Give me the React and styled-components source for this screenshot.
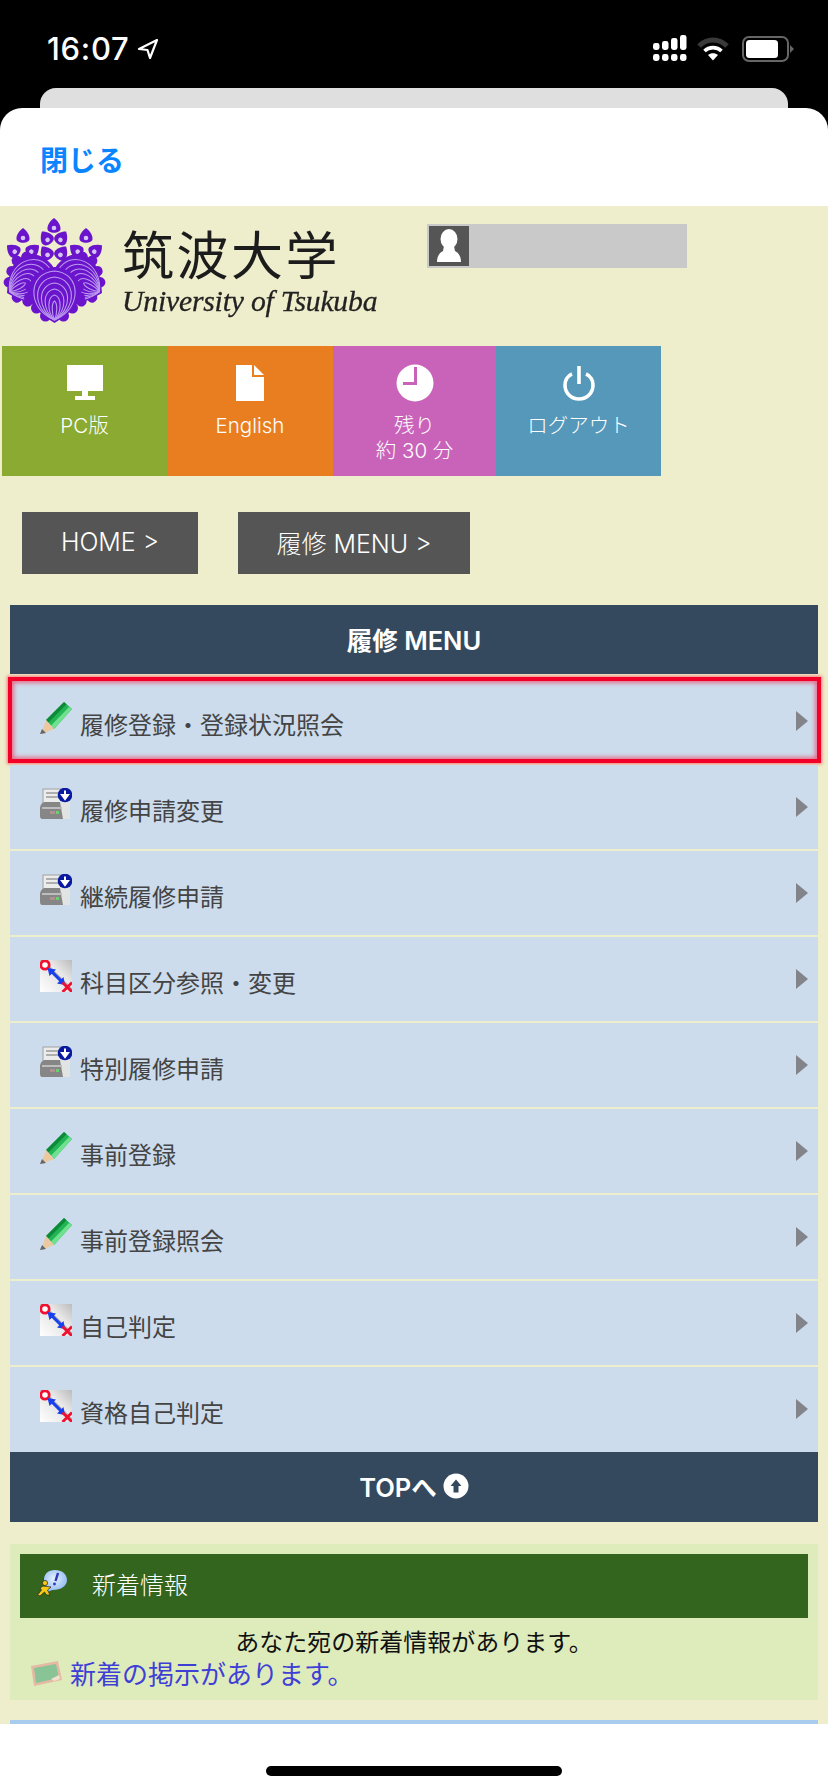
import React from 'react';
import styled, { createGlobalStyle } from 'styled-components';

const JP = `"Noto Sans CJK JP", "Noto Sans", sans-serif`;
const LATIN_JP = `"Inter", "Noto Sans CJK JP", sans-serif`;

const GlobalStyle = createGlobalStyle`
  html, body { margin: 0; padding: 0; background: #000; }
  * { box-sizing: border-box; }
`;

const Screen = styled.div`
  width: 828px;
  height: 1792px;
  overflow: hidden;
  background: #000;
  font-family: ${JP};
  display: flex;
  flex-direction: column;
`;

/* ---------- status bar ---------- */
const StatusBar = styled.div`
  height: 88px;
  flex: none;
  display: flex;
  align-items: flex-start;
  justify-content: space-between;
  padding: 29px 34px 0 47px;
`;
const Clock = styled.div`
  display: flex;
  align-items: center;
  gap: 8px;
  color: #fff;
  font-family: 'Inter', 'Liberation Sans', sans-serif;
  font-size: 31px;
  font-weight: 500;
  line-height: 40px;
  letter-spacing: 0.7px;
`;
const StatusIcons = styled.div`
  display: flex;
  align-items: center;
  height: 40px;
`;
const WifiSlot = styled.div`
  display: flex;
  margin: 0 13px 0 10px;
`;
const BackCard = styled.div`
  height: 20px;
  flex: none;
  margin: 0 40px;
  background: #dfdfdf;
  border-radius: 16px 16px 0 0;
`;

/* ---------- sheet ---------- */
const Sheet = styled.div`
  flex: 1;
  display: flex;
  flex-direction: column;
  background: #fff;
  border-radius: 22px 22px 0 0;
  overflow: hidden;
`;
const NavBar = styled.div`
  height: 98px;
  flex: none;
  padding: 31px 0 0 40px;
  color: #0a84ff;
  font-size: 28px;
  font-weight: 700;
  line-height: 40px;
`;
const Page = styled.div`
  height: 1518px;
  flex: none;
  background: #eeedcc;
  overflow: hidden;
`;
const HomeArea = styled.div`
  flex: 1;
  display: flex;
  justify-content: center;
  padding-top: 42px;
  background: #fff;
`;
const HomeBar = styled.div`
  width: 296px;
  height: 10px;
  border-radius: 5px;
  background: #000;
`;

/* ---------- top of the page ---------- */
const TopRow = styled.div`
  height: 140px;
  display: flex;
  align-items: flex-start;
`;
const Logo = styled.div`
  width: 427px;
  height: 140px;
  display: flex;
  padding: 12px 0 0 2px;
  filter: blur(0.5px);
`;
const LogoWords = styled.div`
  display: flex;
  flex-direction: column;
  margin-left: 15px;
`;
const LogoKanji = styled.div`
  color: #1c1c1c;
  font-size: 52px;
  line-height: 58px;
  margin: 6px 0 0 0;
  letter-spacing: 2.5px;
  font-weight: 400;
  white-space: nowrap;
`;
const LogoLatin = styled.div`
  color: #222;
  font-family: 'Liberation Serif', serif;
  font-style: italic;
  font-size: 29.7px;
  line-height: 34px;
  letter-spacing: -0.2px;
  margin-top: 2px;
  white-space: nowrap;
  -webkit-text-stroke: 0.3px #222;
`;
const UserBox = styled.div`
  width: 260px;
  height: 44px;
  margin-top: 18px;
  padding: 2px;
  background: #c9c9c9;
`;
const UserIcon = styled.div`
  width: 40px;
  height: 40px;
  background: #555;
  display: flex;
  align-items: center;
  justify-content: center;
`;

const Tiles = styled.div`
  display: flex;
  margin-left: 2px;
  height: 130px;
`;
const Tile = styled.div`
  width: ${p => p.$w}px;
  background: ${p => p.$bg};
  color: #fff;
  display: flex;
  flex-direction: column;
  align-items: center;
  padding-top: 18px;
  font-family: ${LATIN_JP};
  font-size: 20.5px;
  font-weight: 300;
  line-height: 25px;
  text-align: center;
`;
const TileIcon = styled.div`
  height: 38px;
  margin-bottom: 11px;
  display: flex;
  align-items: center;
  justify-content: center;
`;

const Crumbs = styled.div`
  display: flex;
  gap: 40px;
  margin: 36px 0 0 22px;
`;
const Crumb = styled.div`
  width: ${p => p.$w}px;
  height: 62px;
  padding-bottom: 2px;
  background: #555;
  color: #fff;
  display: flex;
  align-items: center;
  justify-content: center;
  font-family: ${LATIN_JP};
  font-size: 25px;
  font-weight: 300;
`;

/* ---------- menu ---------- */
const Menu = styled.div`
  margin: 31px 10px 0;
`;
const MenuHead = styled.div`
  height: ${p => p.$h}px;
  padding-bottom: 3px;
  background: #34495e;
  color: #fff;
  display: flex;
  align-items: center;
  justify-content: center;
  gap: 6px;
  font-family: ${LATIN_JP};
  font-size: 25.5px;
  font-weight: 600;
`;
const HeadGap = styled.div`
  height: 5px;
`;
const Row = styled.div`
  position: relative;
  height: 86px;
  display: flex;
  align-items: flex-start;
  padding: 24px 0 0 30px;
  background: #ccdcec;
  border-bottom: 2px solid #eeedcc;
  color: #444;
  font-size: 24px;
  line-height: 36px;
  &:nth-last-child(2) { border-bottom: 0; height: 85px; }
`;
const HiRow = styled(Row)`
  &::after {
    content: '';
    position: absolute;
    left: -2px;
    right: -3px;
    top: -2px;
    bottom: 0;
    border: 4px solid #f20028;
    box-shadow: 0 0 3px 1px rgba(255, 0, 40, 0.5), inset 0 0 4px 2px rgba(255, 0, 40, 0.5);
  }
`;
const RowIcon = styled.div`
  width: 32px;
  height: 32px;
  margin: -1px 8px 0 0;
  flex: none;
  filter: blur(0.4px);
`;
const RowLabel = styled.span`
  margin-top: 3px;
`;
const Arrow = styled.div`
  position: absolute;
  right: 10px;
  top: 32px;
  width: 0;
  height: 0;
  border-left: 12px solid #83838a;
  border-top: 10.5px solid transparent;
  border-bottom: 10.5px solid transparent;
`;

/* ---------- news ---------- */
const News = styled.div`
  margin: 22px 10px 0;
  height: 156px;
  padding: 10px 10px 0;
  background: #deecbc;
`;
const NewsHead = styled.div`
  height: 64px;
  background: #34651f;
  color: #fff;
  display: flex;
  align-items: center;
  padding: 0 0 5px 17px;
  font-size: 24px;
  font-weight: 300;
  gap: 25px;
`;
const NewsText = styled.div`
  margin-top: 7px;
  color: #111;
  text-align: center;
  font-size: 24px;
  line-height: 32px;
`;
const NewsLink = styled.div`
  display: flex;
  align-items: center;
  gap: 8px;
  padding-left: 11px;
  height: 32px;
  color: #3f3fd6;
  font-size: 26px;
  line-height: 32px;
`;
const NextBlock = styled.div`
  margin: 20px 10px 0;
  height: 10px;
  background: #a8cbee;
`;

/* ---------- drawings ---------- */
const Location = () => (
  <svg width="22" height="22" viewBox="0 0 22 22">
    <path d="M20 2 L2 11 L10.5 12 L13 20 Z" fill="none" stroke="#fff" strokeWidth="2.2" strokeLinejoin="round" />
  </svg>
);
const Signal = () => (
  <svg width="34" height="28" viewBox="0 0 34 28" fill="#fff">
    {[
      [0, 8],
      [9, 6],
      [18, 3],
      [27, 0],
    ].map(([x, top]) => (
      <g key={x}>
        <rect x={x} y={19} width="6.5" height="7" rx="2.4" />
        <rect x={x} y={top} width="6.5" height={15 - top} rx="2.4" />
      </g>
    ))}
  </svg>
);
const Wifi = () => (
  <svg width="32" height="24" viewBox="0 0 32 24" fill="none">
    <path d="M2 9 C10 1 22 1 30 9" stroke="#3a3a3a" strokeWidth="5" />
    <path d="M7.5 14 C12 9.5 20 9.5 24.5 14" stroke="#fff" strokeWidth="3.6" />
    <path d="M16 23.5 L11 18 C14 15.8 18 15.8 21 18 Z" fill="#fff" />
  </svg>
);
const Battery = () => (
  <svg width="52" height="26" viewBox="0 0 52 26">
    <rect x="1" y="1" width="45" height="24" rx="6" fill="none" stroke="#666" strokeWidth="2" />
    <rect x="4" y="4" width="32" height="18" rx="3.5" fill="#fff" />
    <path d="M48 9 L52 13 L48 17 Z" fill="#666" />
  </svg>
);

const PURPLE = '#6a14cc';
const LILAC = '#bb9aee';

const Bud = ({ x, y, r = 0 }) => (
  <g transform={`translate(${x} ${y}) rotate(${r})`}>
    <path d="M0 -9 C3 -7 7 -2 6.5 2 C6 7 -6 7 -6.5 2 C-7 -2 -3 -7 0 -9 Z" fill={PURPLE} />
    <circle cy="1" r="2.3" fill="#d6c2f4" />
  </g>
);

const Lobe = ({ transform }) => (
  <g transform={transform}>
    <path d="M0 0 C-20 2 -28 16 -26 28 C-24 40 -10 50 0 56 C10 50 24 40 26 28 C28 16 20 2 0 0 Z" fill={PURPLE} />
    {[
      [24, 20],
      [25, 31],
      [18, 41],
      [9, 49],
    ].map(([x, y]) => (
      <g key={y} fill={PURPLE}>
        <circle cx={-x} cy={y} r="5.5" />
        <circle cx={x} cy={y} r="5.5" />
      </g>
    ))}
    <g fill="none" stroke={LILAC} strokeWidth="1.1">
      <path d="M0 53 C-28 42 -27 6 0 4 C27 6 28 42 0 53" />
      <path d="M0 53 C-23 42 -22 12 0 10 C22 12 23 42 0 53" />
      <path d="M0 53 C-18 42 -17 18 0 16 C17 18 18 42 0 53" />
      <path d="M0 53 C-13 42 -12 24 0 22 C12 24 13 42 0 53" />
      <path d="M0 53 C-8 44 -7 30 0 28 C7 30 8 44 0 53" />
      <path d="M0 53 C-3 46 -3 36 0 34 C3 36 3 46 0 53" />
    </g>
  </g>
);

const Kiri = () => (
  <svg width="105" height="105" viewBox="0 0 105 105">
    <Bud x={52} y={9} />
    <Bud x={45} y={21} r={-35} />
    <Bud x={59} y={21} r={35} />
    <Bud x={45} y={36} r={-35} />
    <Bud x={59} y={36} r={35} />
    <Bud x={21} y={19} />
    <Bud x={12} y={33} r={-50} />
    <Bud x={30} y={33} r={50} />
    <Bud x={84} y={19} />
    <Bud x={75} y={33} r={-50} />
    <Bud x={93} y={33} r={50} />
    <Lobe transform="translate(52 50) rotate(62) scale(0.95)" />
    <Lobe transform="translate(53 50) rotate(-62) scale(0.95)" />
    <Lobe transform="translate(52.5 49)" />
  </svg>
);

const Person = () => (
  <svg width="28" height="34" viewBox="0 0 28 34" fill="#fff">
    <ellipse cx="14" cy="10" rx="8.5" ry="10" />
    <path d="M9 17 H19 L20 22 C24 24 26 28 26 33 H2 C2 28 4 24 8 22 Z" />
  </svg>
);
const Monitor = () => (
  <svg width="36" height="36" viewBox="0 0 36 36" fill="#fff">
    <rect width="36" height="26" />
    <rect x="15" y="26" width="6" height="5" />
    <rect x="8" y="31" width="20" height="4" />
  </svg>
);
const Doc = () => (
  <svg width="28" height="36" viewBox="0 0 28 36" fill="#fff">
    <path d="M0 0 H16 V12 H28 V36 H0 Z" />
    <path d="M18 0 L28 10 H18 Z" />
  </svg>
);
const ClockIcon = () => (
  <svg width="38" height="38" viewBox="0 0 38 38">
    <circle cx="19" cy="19" r="18.5" fill="#fff" />
    <path d="M21 3 V21 H7 V18 H18 V3 Z" fill="#c963b9" />
  </svg>
);
const Power = () => (
  <svg width="32" height="36" viewBox="0 0 32 36" fill="none" stroke="#fff" strokeWidth="3.6">
    <path d="M9 9 C4 11 2 16 2 20 C2 28 8 34 16 34 C24 34 30 28 30 20 C30 16 28 11 23 9" />
    <path d="M16 1 V19" />
  </svg>
);

const Pencil = () => (
  <svg width="32" height="32" viewBox="0 0 32 32">
    <path d="M6 18 L24 0 L32 7 L14 27 Z" fill="#22b455" />
    <path d="M6 18 L24 0 L26.5 2.2 L8.5 20.5 Z" fill="#0c8a38" />
    <path d="M11 23.5 L29 5 L32 7 L14 27 Z" fill="#6fe08e" />
    <path d="M6 18 L14 27 L1 32 Z" fill="#ecc8a0" />
    <path d="M2 27 L6 31 L0 32 Z" fill="#666" />
  </svg>
);
const Printer = () => (
  <svg width="32" height="32" viewBox="0 0 32 32">
    <rect x="3" y="1" width="21" height="16" fill="#ececec" stroke="#a0a0a0" />
    <path d="M6 5 H20 M6 9 H20" stroke="#999" strokeWidth="1.5" />
    <rect x="20" y="12" width="10" height="19" fill="#e2e4e4" />
    <path d="M4 14 H20 L23 31 H3 C0 31 0 29 0 27 V20 C0 17 2 15 4 14 Z" fill="#868686" />
    <rect x="2" y="19" width="20" height="2" fill="#bdbdbd" />
    <rect x="16" y="23" width="3" height="3" fill="#6cd070" />
    <rect x="10" y="23" width="5" height="3" fill="#b09090" />
    <circle cx="25" cy="7" r="7.3" fill="#0a1aa0" />
    <path d="M25 2.5 V8 M22 7 L25 11 L28 7 Z" stroke="#fff" strokeWidth="2" fill="#fff" />
  </svg>
);
const Measure = () => (
  <svg width="32" height="32" viewBox="0 0 32 32">
    <defs>
      <linearGradient id="meas" x1="0" y1="1" x2="1" y2="0">
        <stop offset="0" stopColor="#fff" />
        <stop offset="0.47" stopColor="#e8e8e8" />
        <stop offset="0.53" stopColor="#8a8a8a" />
        <stop offset="0.57" stopColor="#ededed" />
        <stop offset="1" stopColor="#bbb" />
      </linearGradient>
    </defs>
    <rect width="32" height="32" fill="url(#meas)" />
    <circle cx="5" cy="5" r="4.2" fill="#fff" stroke="#f01030" strokeWidth="2.8" />
    <path d="M10 10 L23 23" stroke="#1840f0" strokeWidth="3" />
    <path d="M7.5 8 L16 9.5 L9.5 16 Z M25 25 L17 23.5 L23.5 17 Z" fill="#1840f0" />
    <path d="M22.5 22.5 L32 32 M32 22.5 L22.5 32" stroke="#f01030" strokeWidth="2.8" />
  </svg>
);
const UpCircle = () => (
  <svg width="26" height="26" viewBox="0 0 26 26">
    <circle cx="13" cy="13" r="12.5" fill="#fff" />
    <path d="M13 6.5 L18.5 13 H15.5 V19.5 H10.5 V13 H7.5 Z" fill="#34495e" />
  </svg>
);
const Runner = () => (
  <svg width="30" height="27" viewBox="0 0 30 27">
    <defs>
      <radialGradient id="bub" cx="0.45" cy="0.4" r="0.7">
        <stop offset="0" stopColor="#e8f2ff" />
        <stop offset="1" stopColor="#7fb0ee" />
      </radialGradient>
    </defs>
    <path d="M18 0 C25 0 30 4 30 10 C30 16 24 20 16 20 C14 20 12 22 9 22 C10 19 7 15 7 10 C7 4 11 0 18 0 Z" fill="url(#bub)" />
    <path d="M21 3 L18.5 11" stroke="#2a38b8" strokeWidth="2.4" />
    <circle cx="17.5" cy="14" r="1.4" fill="#2a38b8" />
    <circle cx="8" cy="13" r="2.6" fill="#f4c814" stroke="#222" strokeWidth="0.7" />
    <path d="M6 16 L14 17 L10.5 20 L13 25 L9.5 25 L7.5 22 L3 26 L0.5 25 L4.5 20 L3 18 Z" fill="#f4c814" stroke="#222" strokeWidth="0.7" />
  </svg>
);
const Board = () => (
  <svg width="31" height="25" viewBox="0 0 31 25">
    <path d="M0 5 L27 0 L31 19 L3 25 Z" fill="#e6b9a2" />
    <path d="M3 7 L25 3 L28 17 L5 22 Z" fill="#88c496" />
    <path d="M20 18 L28 14 L29 18 L23 20 Z" fill="#f0e0d0" />
  </svg>
);

const rowIcons = { pencil: Pencil, printer: Printer, measure: Measure };

const rows = [
  { icon: 'printer', label: '履修申請変更' },
  { icon: 'printer', label: '継続履修申請' },
  { icon: 'measure', label: '科目区分参照・変更' },
  { icon: 'printer', label: '特別履修申請' },
  { icon: 'pencil', label: '事前登録' },
  { icon: 'pencil', label: '事前登録照会' },
  { icon: 'measure', label: '自己判定' },
  { icon: 'measure', label: '資格自己判定' },
];

const tiles = [
  { w: 165, bg: '#8aaa32', icon: <Monitor />, text: ['PC版'] },
  { w: 166, bg: '#e87e20', icon: <Doc />, text: ['English'] },
  { w: 163, bg: '#c963b9', icon: <ClockIcon />, text: ['残り', '約 30 分'] },
  { w: 165, bg: '#5598ba', icon: <Power />, text: ['ログアウト'] },
];

const App = () => (
  <Screen>
    <GlobalStyle />
    <StatusBar>
      <Clock>16:07 <Location /></Clock>
      <StatusIcons>
        <Signal />
        <WifiSlot><Wifi /></WifiSlot>
        <Battery />
      </StatusIcons>
    </StatusBar>
    <BackCard />
    <Sheet>
      <NavBar>閉じる</NavBar>
      <Page>
        <TopRow>
          <Logo>
            <Kiri />
            <LogoWords>
              <LogoKanji>筑波大学</LogoKanji>
              <LogoLatin>University of Tsukuba</LogoLatin>
            </LogoWords>
          </Logo>
          <UserBox>
            <UserIcon><Person /></UserIcon>
          </UserBox>
        </TopRow>
        <Tiles>
          {tiles.map(t => (
            <Tile key={t.w + t.bg} $w={t.w} $bg={t.bg}>
              <TileIcon>{t.icon}</TileIcon>
              {t.text.map(line => <div key={line}>{line}</div>)}
            </Tile>
          ))}
        </Tiles>
        <Crumbs>
          <Crumb $w={176}>HOME &gt;</Crumb>
          <Crumb $w={232}>履修 MENU &gt;</Crumb>
        </Crumbs>
        <Menu>
          <MenuHead $h={69}>履修 MENU</MenuHead>
          <HeadGap />
          <HiRow>
            <RowIcon><Pencil /></RowIcon>
            <RowLabel>履修登録・登録状況照会</RowLabel>
            <Arrow />
          </HiRow>
          {rows.map(r => {
            const Icon = rowIcons[r.icon];
            return (
              <Row key={r.label}>
                <RowIcon><Icon /></RowIcon>
                <RowLabel>{r.label}</RowLabel>
                <Arrow />
              </Row>
            );
          })}
          <MenuHead $h={70}>TOPへ <UpCircle /></MenuHead>
        </Menu>
        <News>
          <NewsHead><Runner />新着情報</NewsHead>
          <NewsText>あなた宛の新着情報があります。</NewsText>
          <NewsLink><Board />新着の掲示があります。</NewsLink>
        </News>
        <NextBlock />
      </Page>
      <HomeArea><HomeBar /></HomeArea>
    </Sheet>
  </Screen>
);

export default App;
